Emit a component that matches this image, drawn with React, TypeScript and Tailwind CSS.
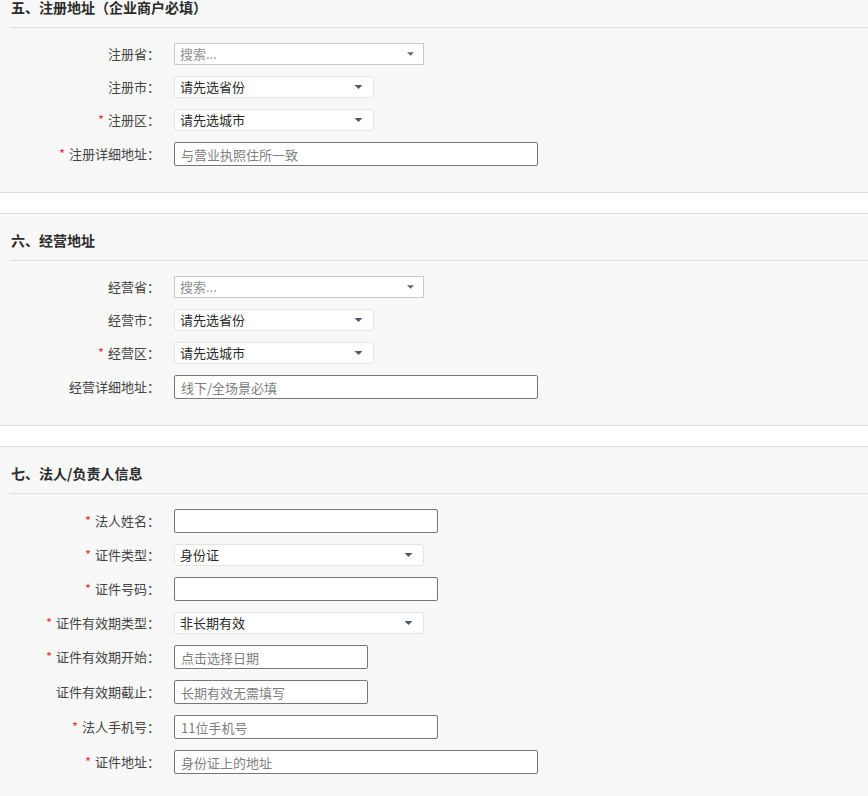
type Field =
  | { kind: "search"; label: string; required?: boolean; placeholder: string }
  | { kind: "select"; label: string; required?: boolean; value: string; width: string }
  | { kind: "input"; label: string; required?: boolean; placeholder?: string; width: string };

interface Section {
  title: string;
  fields: Field[];
}

const sections: Section[] = [
  {
    title: "五、注册地址（企业商户必填）",
    fields: [
      { kind: "search", label: "注册省", placeholder: "搜索..." },
      { kind: "select", label: "注册市", value: "请先选省份", width: "w-[200px]" },
      { kind: "select", label: "注册区", required: true, value: "请先选城市", width: "w-[200px]" },
      { kind: "input", label: "注册详细地址", required: true, placeholder: "与营业执照住所一致", width: "w-[364px]" },
    ],
  },
  {
    title: "六、经营地址",
    fields: [
      { kind: "search", label: "经营省", placeholder: "搜索..." },
      { kind: "select", label: "经营市", value: "请先选省份", width: "w-[200px]" },
      { kind: "select", label: "经营区", required: true, value: "请先选城市", width: "w-[200px]" },
      { kind: "input", label: "经营详细地址", placeholder: "线下/全场景必填", width: "w-[364px]" },
    ],
  },
  {
    title: "七、法人/负责人信息",
    fields: [
      { kind: "input", label: "法人姓名", required: true, width: "w-[264px]" },
      { kind: "select", label: "证件类型", required: true, value: "身份证", width: "w-[250px]" },
      { kind: "input", label: "证件号码", required: true, width: "w-[264px]" },
      { kind: "select", label: "证件有效期类型", required: true, value: "非长期有效", width: "w-[250px]" },
      { kind: "input", label: "证件有效期开始", required: true, placeholder: "点击选择日期", width: "w-[194px]" },
      { kind: "input", label: "证件有效期截止", placeholder: "长期有效无需填写", width: "w-[194px]" },
      { kind: "input", label: "法人手机号", required: true, placeholder: "11位手机号", width: "w-[264px]" },
      { kind: "input", label: "证件地址", required: true, placeholder: "身份证上的地址", width: "w-[364px]" },
    ],
  },
];

function Arrow({ className }: { className: string }) {
  return (
    <svg viewBox="0 0 8 4" className={className}>
      <path d="M0 0h8L4 4z" fill="currentColor" />
    </svg>
  );
}

function Control({ field }: { field: Field }) {
  if (field.kind === "search") {
    return (
      <div className="flex h-[22px] w-[250px] items-center justify-between border border-[#c9c9c9] bg-white pl-[5px] pr-[9px] text-[13px] leading-[20px] text-[#8f8f8f]">
        <span>{field.placeholder}</span>
        <Arrow className="h-[4px] w-[7px] text-[#666]" />
      </div>
    );
  }
  if (field.kind === "select") {
    return (
      <div
        className={`flex h-[22px] ${field.width} items-center justify-between rounded-[3px] border border-[#e4e4e4] bg-white pl-[5px] pr-[10px] text-[13px] leading-[20px] text-[#2b2b2b]`}
      >
        <span>{field.value}</span>
        <Arrow className="h-[4px] w-[9px] text-[#4c5b6b]" />
      </div>
    );
  }
  return (
    <input
      placeholder={field.placeholder}
      className={`block h-[24px] ${field.width} rounded-[2px] border border-[#767676] bg-white px-[6px] text-[13px] text-[#333] outline-none placeholder:text-[#808080]`}
    />
  );
}

export default function App() {
  return (
    <div
      className="-mt-[20px] flex flex-col gap-[20px] bg-white pb-[20px] text-[#444]"
      style={{ fontFamily: '"Noto Sans CJK SC", "Noto Sans", sans-serif' }}
    >
      {sections.map((section) => (
        <div key={section.title} className="border-y border-[#dedede] bg-[#f8f8f8]">
          <div className="ml-[10px] border-b border-[#dedede] pb-[10px] pl-[1px] pt-[16px]">
            <h3 className="text-[14px] font-bold leading-[20px] text-[#2b2b2b]">{section.title}</h3>
          </div>
          <div className="flex flex-col gap-[11px] pb-[26px] pt-[15px]">
            {section.fields.map((field) => (
              <div key={field.label} className="flex items-center">
                <label className="w-[160px] text-right text-[13px] leading-[20px] text-[#444]">
                  {field.required && <span className="mr-[4px] text-[#e33]">*</span>}
                  {field.label}：
                </label>
                <div className="ml-[14px] flex">
                  <Control field={field} />
                </div>
              </div>
            ))}
          </div>
        </div>
      ))}
    </div>
  );
}
